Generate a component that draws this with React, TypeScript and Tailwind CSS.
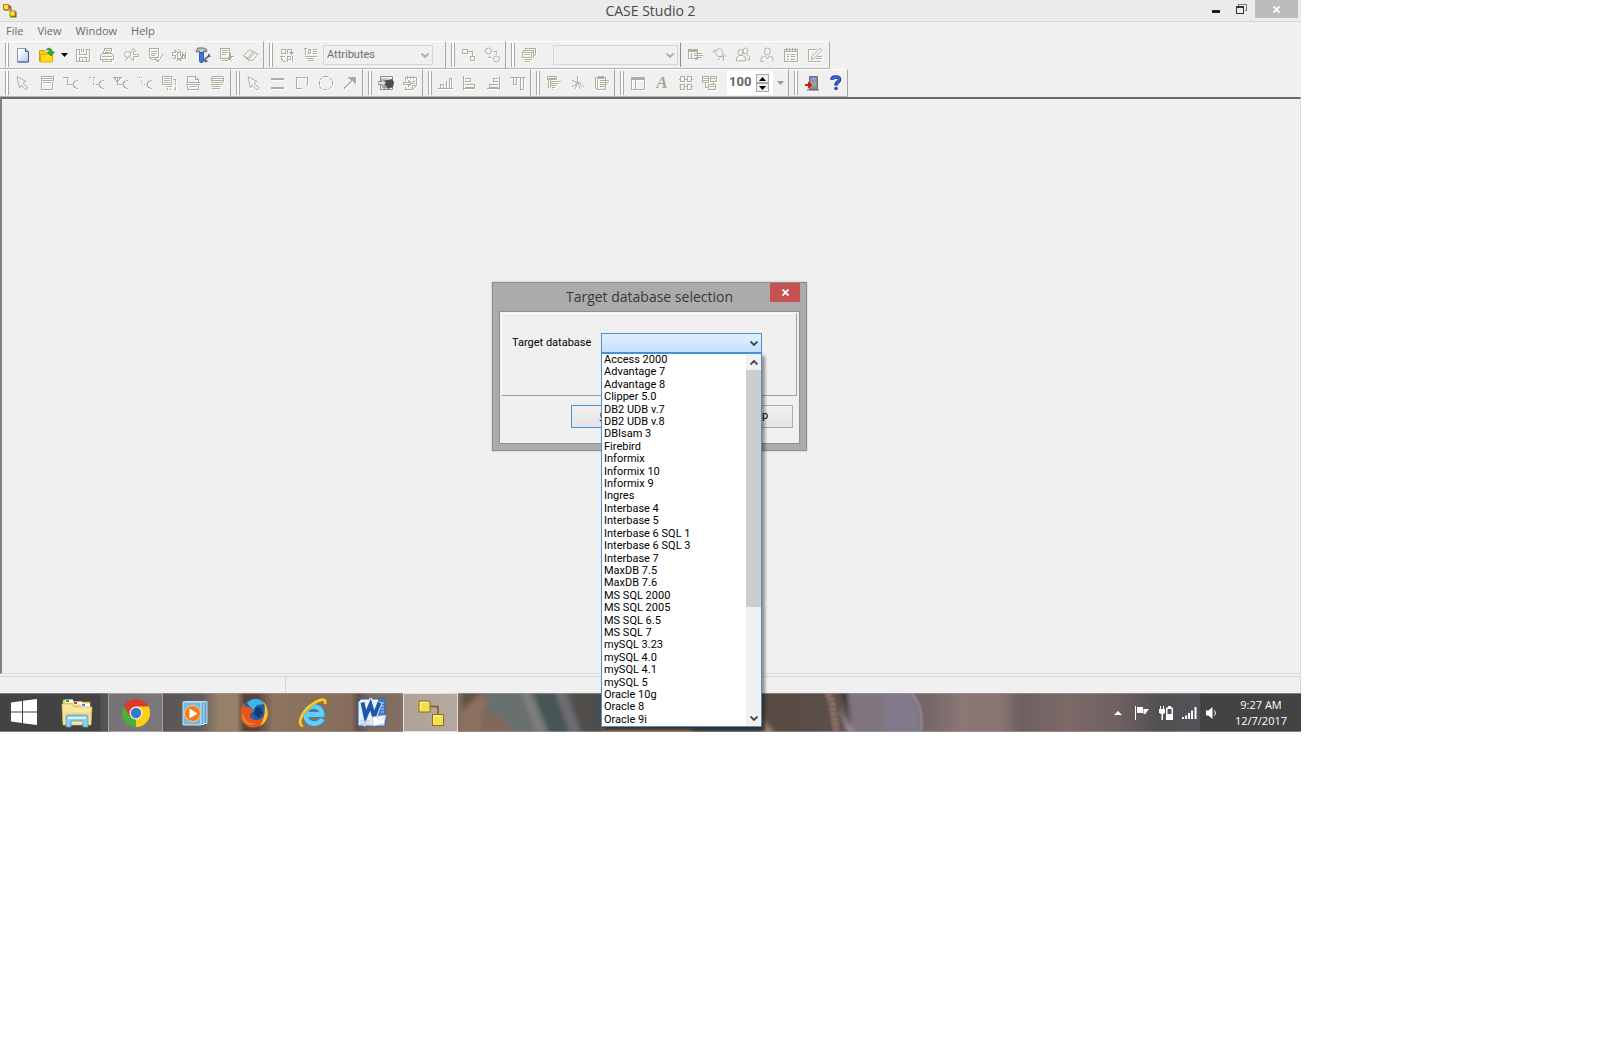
import React from "react";

type IconSpec = { d: string; fill?: string; tone?: string; round?: boolean };

const icons: Record<string, IconSpec> = {
  save: { d: "M1.5 2.5h3v5h7v-5h3v12h-13z M4.5 14.5v-4h7v4 M6.5 2v3 M8.5 2v3 M7.5 12v2" },
  print: { d: "M4.5 6.5l1-5h7l-1 5 M3.5 6.5h9l2 2v4h-13v-4z M3.5 12.5v2h9v-2 M7 3.5h4 M6 5.5h4 M3 9.5h10" },
  find: { d: "M1.5 7.5a3 3 0 1 0 6 0a3 3 0 1 0-6 0 M8 6.5V4l2.5-2.500l2 3h-2v3h5v2h-5v4l-3-3 M5 10.5l-3 3.500", round: true },
  check: { d: "M2.5 1.5h9v9h-9z M4 4.5h6 M4 6.5h6 M4 8.5h4 M2.5 10.5l2 2h4 M8 11l3 3.500l5-7" },
  sql: { d: "M4.5 5.5h-3v3h3v3h-3 M9.5 5.5h-3v6h4z M11.5 5v6.5h3 M3 3.5l3 1 M7 2.500l3 2 M6 14l2-2l3 2 M14 4.5v5l-2-2" },
  script: { d: "M1.5 1.5h9v10h-9z M3 3.5h6 M3 5.5h6 M3 7.5h4 M3 13.5h5 M8 14l6-5 M11.500 6v3h3 M9 10l4 4" },
  book: { d: "M.5 8.500l6-5.500l3.500 1.500l-5 7z M6 12.500l6-7l3 2l-6 6.500l-4-1l-4-4 M10 4.500l2 1 M4 11.500l3 2", round: true },
  model: { d: "M2.5 2.5h4v4h-4z M8.500 6.500v-4h4v4 M10.500 5l2 2l2-2 M1 9.5h5 M2.500 12l2 2.500h2 M2.500 8.500v4 M8.500 14.500v-5h3v3h-3 M13.500 9v6" },
  levels: { d: "M2.5 1.5v6 M5.5 2.5h2v4h-2z M9.5 2.5h4 M9.5 4.5h4 M9.5 6.5h4 M2 9.5h12 M3 11.5h8 M5 13.5h6 M1 1.5h3" },
  relation: { d: "M1.5 2.5h5v4h-5z M9.5 9.5h4v4h-4z M7 4.5h4.5v4" },
  circles: { d: "M.5 4a3 3 0 1 0 6 0a3 3 0 1 0-6 0 M8.500 12a3 3 0 1 0 6 0a3 3 0 1 0-6 0 M8 4.5h3.500v3 M4 8.500v2h3", round: true },
  stack: { d: "M4.5 3.500v-2h10v6l-2 2 M2.5 5.5v-2h10v7 M1.5 5.5h9v5h-9z M3 7.500h6 M3 12.500h8 M4 14.500h5 M13 5.500h-2" },
  entity: { d: "M1.5 2.5h9v9h-9z M1.5 3.500h9 M1.5 4.5h9 M6.5 6.5h8 M6.5 8.5h9 M8.5 10.5h6 M4.5 6v5 M7.500 12.500h3" },
  links: { d: "M1 5.500l3-3l3 3 M4 3.500c0 4 2 6 5 6 M6 2.500c4-2 6 1 6 5 M9.500 10l3-3l3 3 M7 13.500c2-3 2-4 5-4 M12.500 9v5", round: true },
  users: { d: "M8 4a2.500 3 0 1 1 5 0a2.500 3 0 1 1-5 0 M3 5.500a2.500 3 0 1 1 5 0a2.500 3 0 1 1-5 0 M1.500 14v-3.500l3-2h3l3 2v3.500z M12 7.500l2.500 2v3.500h-3", round: true },
  user: { d: "M5.500 4.500a3 3.500 0 1 1 6 0a3 3.500 0 1 1-6 0 M1.500 14.500l1-4l3-1.500 M6.500 9l2 3l2-3l3.500 1.500v4 M2 14.500h3", round: true },
  todo: { d: "M1.5 2.5h13v12h-13z M3.500 1v3 M6.500 1v3 M9.500 1v3 M12.500 1v3 M1.500 4.500h13 M4 7.500h2 M8 7.500h4 M4 9.500h2 M8 9.500h4 M4 12.500h2 M8 12.500h4" },
  edit: { d: "M10 2.500h-8.500v12h12 M4.500 12.500l.5-3l8-8l2 2l-8 8z M10 9.500h5 M9 11.500h6", round: true },
  pointer: { d: "M2 1.500l9 5l-3 1.500l5 5l-2 2l-4.500-5l-2 3z", round: true },
  table: { d: "M2.500 1.500h12v4h-12z M2.500 3.500h12 M2.500 7v7.500h11v-8 M4 7.500h8" },
  rel1: { d: "M0 2.500h5.500 M4.500 3v7 M4.500 9.500h6 M15 5.500h-2 M12.500 6l-2 2v3l2 2 M12.500 13.500h2.500", round: false },
  rel2: { d: "M0 2.500h2 M4 2.500h2 M4.500 4v2 M4.500 8v2 M7 9.500h3 M15 5.500h-2 M12.500 6l-2 2v3l2 2 M12.500 13.500h2.500" },
  rel3: { d: "M0 2.500h9 M1.500 3l3 4l3-4 M4.500 3v7 M4.500 9.500h6 M15 5.500h-2 M12.500 6l-2 2v3l2 2 M12.500 13.500h2.500" },
  rel4: { d: "M0 2.500h1M2 2.500h1M4 2.500h1 M4.500 5v1M4.500 7v1M5 9.500h1M7 9.500h1M9 9.500h1 M15 5.500h-2 M12.500 6l-2 2v3l2 2 M12.500 13.500h2.500" },
  copy: { d: "M1.500 1.500h9v8h-9z M3 3.500h6 M3 5.500h6 M3 7.500h6 M12 4.500h2.500v2M14.500 8v2M14.500 12v2.500h-2M10 14.500h-2M6.500 14.500v-2 M5.500 11.500h5v-1" },
  note: { d: "M2.500 7.500v-6h8l3 3v3 M10.500 1.500v3h3 M1 7.500h14 M2.500 9v5.500h11v-5 M4.500 11.500h7 M1 9.500h14" },
  view: { d: "M3.500 1.500h10l1 1v4l-1 1h-10l-1-1v-4z M3 3.500h11 M3 5.500h11 M2 9.500h12 M3 11.500h9 M3 13.500h8" },
  lines: { d: "M1 3.500h13 M1 4.500h13 M1 12.500h13 M1 13.500h13" },
  rect: { d: "M8 13.500h-5.500v-11h11v8" },
  ellipse: { d: "M5 1.500h5 M11 2.500l3 3 M14.500 6v4 M14 11l-3 3 M5 14.500h4 M4 14l-3-3 M1.500 10v-4 M2 5l2-2.500", round: true },
  arrow: { d: "M2 14l8-8 M2 13l8-8 M7 2.500h6.500v6z", fill: "#aaa590" },
  export: { d: "M3.500 5.500v-3h11v8l-4 4h-7v-3 M5.500 1v3 M8.500 1v3 M11.500 1v3 M1 7.500h5v-2l3 3l-3 3v-2h-5z M10 6.500h3 M10 8.500h3 M10 14v-3.500h4" },
  alignB: { d: "M0 13.500h15 M2.500 13v-4h3v4 M8.500 13v-7 M11.500 13v-10h2v10" },
  alignL: { d: "M1.500 1v14 M3 3.500h5v3h-5 M3 9.500h9v3h-9 M1 13.500h12" },
  alignR: { d: "M13.500 1v14 M12 3.500h-5v3h5 M12 9.500h-9v3h9 M1 13.500h12" },
  alignT: { d: "M0 2.500h15 M3.500 3v6h3v-6 M10.500 3v11h3v-11" },
  sort: { d: "M1.500 1.500h9v3h-9z M2.500 5v8 M4.500 5v9 M5 6.500h10 M5 8.500h8 M5 10.500h6 M6 12.500h3 M6 14.500h1 M3 3.500h7" },
  cut: { d: "M7.500 1v8 M8 7l6 5 M8 8l-6 4 M8 9l3 5 M7 9l-2 5 M8 8h3 M2 5l5 3", round: true },
  paste: { d: "M1.500 2.500h10v12h-8l-2-2z M4 1.500h5v2h-5z M5.500 5.500h9 M5.500 7.500h9 M5.500 9.500h7 M5.500 11.500h5 M3.500 4v10" },
  layout: { d: "M1.500 2.500h13v12h-13z M1.500 3.500h13 M1.500 4.500h13 M5.500 5v9" },
  grid: { d: "M2.500 1.500h4v5h-4z M9.500 1.500h4v5h-4z M2.500 9.500h4v5h-4z M9.500 9.500h4v5h-4z M1 4.500h1 M7 4.500h2 M14 4.500h1 M1 11.500h1 M7 11.500h2 M14 11.500h1" },
  tree: { d: "M.500 1.500h6v6h-6z M8.500 1.500h6v5h-6z M6.500 9.500h7v5h-7z M1 3.500h5 M1 5.500h5 M9 3.500h5 M7 11.500h6 M3.500 8v4h3 M11.500 7v2" },
};

function Ico({ name }: { name: string }) {
  const s = icons[name];
  const mode = s.round ? "auto" : "crispEdges";
  return (
    <svg className="size-4" viewBox="0 0 16 16" fill="none" shapeRendering={mode} aria-hidden="true">
      <path d={s.d} transform="translate(1 1)" stroke="#fff" />
      <path d={s.d} stroke={s.tone ?? "#b1ad9c"} fill={s.fill ?? "none"} />
    </svg>
  );
}

const Tool = ({ name, className = "" }: { name: string; className?: string }) => (
  <button aria-label={name} className={`flex h-6 w-6 shrink-0 items-center justify-center ${className}`}>
    <Ico name={name} />
  </button>
);

const Tools = ({ names }: { names: string[] }) => (
  <>
    {names.map((n) => (
      <Tool key={n} name={n} />
    ))}
  </>
);

function Group({ children, className = "" }: { children: React.ReactNode; className?: string }) {
  return (
    <div className={`flex h-7 shrink-0 items-center border-t border-r border-b border-t-white border-r-[#a6a6a6] border-b-[#b4b4b4] pl-[5px] ${className}`}>
      <span className="mr-0.5 h-6 w-1 border-x border-[#a9a9a9] bg-white" />
      {children}
    </div>
  );
}

const Chevron = ({ color, up = false }: { color: string; up?: boolean }) => (
  <svg className="h-[5px] w-2" viewBox="0 0 8 5" fill="none" stroke={color} strokeWidth="1.800" aria-hidden="true">
    <path d={up ? "M.5 4.500L4 1l3.500 3.500" : "M.5 .5L4 4L7.500 .5"} />
  </svg>
);

function ToolCombo({ label, value, className }: { label: string; value: string; className: string }) {
  return (
    <span className={`relative flex h-5 shrink-0 ${className}`}>
      <select aria-label={label} className="block h-5 w-full appearance-none border border-[#d6d6d6] bg-[#f0f0f0] px-[3px] font-['Roboto',sans-serif] text-[11px] leading-[18px] text-[#6d6d6d]">
        <option>{value}</option>
      </select>
      <span className="pointer-events-none absolute top-2 right-1 flex">
        <Chevron color="#aaa" />
      </span>
    </span>
  );
}

const databases = [
  "Access 2000", "Advantage 7", "Advantage 8", "Clipper 5.0", "DB2 UDB v.7", "DB2 UDB v.8", "DBIsam 3", "Firebird",
  "Informix", "Informix 10", "Informix 9", "Ingres", "Interbase 4", "Interbase 5", "Interbase 6 SQL 1",
  "Interbase 6 SQL 3", "Interbase 7", "MaxDB 7.5", "MaxDB 7.6", "MS SQL 2000", "MS SQL 2005", "MS SQL 6.5",
  "MS SQL 7", "mySQL 3.23", "mySQL 4.0", "mySQL 4.1", "mySQL 5", "Oracle 10g", "Oracle 8", "Oracle 9i",
];

function TitleBar() {
  return (
    <header className="relative flex h-[22px] items-start justify-center border-b border-[#d5d5d5] bg-[#ebebeb]">
      <svg className="absolute top-[3px] left-[2px] size-[15px]" viewBox="0 0 15 15" aria-hidden="true">
        <path d="M6 3.500h2.500l1 6" stroke="#8a6a1a" fill="none" strokeWidth="1.500" />
        <rect x="2" y="2" width="5.500" height="5.500" fill="#6b5a20" />
        <rect x="8.500" y="8.500" width="6" height="6" fill="#6b5a20" />
        <rect x="1.500" y="1.500" width="5" height="5" fill="#ffe23d" stroke="#b8860b" />
        <rect x="8" y="8" width="5" height="5" fill="#ffe23d" stroke="#b8860b" />
      </svg>
      <h1 className="font-['Open_Sans',sans-serif] text-[14px] leading-[22px] text-[#484848]">CASE Studio 2</h1>
      <div className="absolute top-0 right-[3px] flex h-[18px]">
        <button aria-label="Minimize" className="flex w-[26px] items-center justify-center pt-[5px]">
          <span className="h-[3px] w-2 bg-[#1e1e1e]" />
        </button>
        <button aria-label="Restore" className="flex w-[24px] items-center justify-center">
          <svg className="h-[10px] w-[11px]" viewBox="0 0 11 10" fill="none" stroke="#333" shapeRendering="crispEdges" aria-hidden="true">
            <path d="M2.500 2V.5h8v6H9" stroke="#777" />
            <path d="M.5 2.500h7v7h-7z M.5 3.500h7" />
          </svg>
        </button>
        <button aria-label="Close" className="ml-0.5 flex w-[43px] items-center justify-center bg-[#bcbcbc]">
          <svg className="size-[7px]" viewBox="0 0 7 7" stroke="#fff" strokeWidth="1.800" aria-hidden="true">
            <path d="M.5 .5l6 6M6.500 .5l-6 6" />
          </svg>
        </button>
      </div>
    </header>
  );
}

function Toolbars() {
  return (
    <div>
      <div className="flex">
        <Group>
          <button aria-label="New" className="flex h-6 w-6 items-center justify-center">
            <svg className="size-4" viewBox="0 0 16 16" aria-hidden="true">
              <defs>
                <linearGradient id="page" x1="0" y1="0" x2="1" y2="1">
                  <stop offset=".2" stopColor="#fff" />
                  <stop offset="1" stopColor="#a9c4f5" />
                </linearGradient>
              </defs>
              <path d="M2.500 1.500h8l3 3v10.500h-11z" fill="url(#page)" stroke="#8797b5" />
              <path d="M10.500 1.500v3h3M2.500 15h11v-10" fill="none" stroke="#44598a" />
            </svg>
          </button>
          <button aria-label="Open" className="flex h-6 w-[23px] items-center justify-center">
            <svg className="size-4" viewBox="0 0 16 16" aria-hidden="true">
              <path d="M.5 3.500h5l1.500 2h6v9H.5z" fill="#ffc812" stroke="#e09a00" />
              <path d="M1.500 7.500h12v7.500h-12z" fill="#ffdf1c" stroke="#eda800" />
              <path d="M7 3c2-3 6-2 6.500 2h2L12 9 8.500 5h2C10.500 3 9 2.500 7 3z" fill="#2eb135" stroke="#147a1c" strokeWidth=".6" />
            </svg>
          </button>
          <button aria-label="Recent files" className="flex h-6 w-[13px] items-center justify-center">
            <svg className="h-1 w-[7px]" viewBox="0 0 7 4" aria-hidden="true"><path d="M0 0h7L3.500 4z" /></svg>
          </button>
          <Tools names={["save", "print", "find", "check", "sql"]} />
          <button aria-label="Tools" className="flex h-6 w-6 items-center justify-center">
            <svg className="size-4" viewBox="0 0 16 16" fill="none" aria-hidden="true">
              <path d="M1 4l2-3h6l3 2-1 2-2-1.500v2H4V3.500L2 5.500z" fill="#c3cad2" stroke="#4f565f" strokeWidth=".9" />
              <path d="M4.500 6h4v8.500l-1 1h-2l-1-1z" fill="#3f74e8" stroke="#2447ab" strokeWidth=".8" />
              <path d="M9.500 14.500l1-3 3-2 .5-2.500M13.500 9.500l2-.5M10.500 11.500l-1 1M10 15l2.500-1.500" stroke="#5d656e" strokeWidth="1.600" />
            </svg>
          </button>
          <Tools names={["script", "book"]} />
        </Group>
        <Group className="pr-3">
          <Tools names={["model", "levels"]} />
          <ToolCombo label="Display level" value="Attributes" className="w-[110px]" />
        </Group>
        <Group>
          <Tools names={["relation", "circles"]} />
        </Group>
        <Group className="pr-0.5">
          <Tool name="stack" />
          <ToolCombo label="Submodel" value="" className="ml-3 w-[125px]" />
          <span className="mr-0.5 ml-0.5 h-6 w-px bg-[#8c8c8c]" />
          <Tools names={["entity", "links", "users", "user", "todo", "edit"]} />
        </Group>
      </div>
      <div className="flex">
        <Group className="pr-px">
          <Tools names={["pointer", "table", "rel1"]} />
          <span className="w-0.5" />
          <Tools names={["rel2", "rel3", "rel4", "copy", "note", "view"]} />
        </Group>
        <Group>
          <Tools names={["pointer", "lines", "rect", "ellipse", "arrow"]} />
        </Group>
        <Group>
          <button aria-label="Image" className="flex h-6 w-6 items-center justify-center">
            <svg className="size-4" viewBox="0 0 16 16" fill="none" aria-hidden="true">
              <path d="M2.500 1.500h12v13h-12z" fill="#f4f4f4" stroke="#8b8b8b" />
              <path d="M5 4l4 1 5-1 2 3-1 5-5 2-3-4-2-1 3-1z" fill="#4c4c4c" />
              <path d="M4 12l3-2 2 3-3 1z" fill="#999" />
              <path d="M3 3h8l-2 2-6 1z" fill="#c9c9c9" />
              <path d="M0 6.500h4v-2l4 3.500-4 3.500v-2H0z" fill="#e2e2e2" stroke="#808080" strokeWidth=".8" />
            </svg>
          </button>
          <Tool name="export" />
        </Group>
        <Group>
          <Tools names={["alignB", "alignL", "alignR", "alignT"]} />
        </Group>
        <Group>
          <Tools names={["sort", "cut", "paste"]} />
        </Group>
        <Group>
          <Tool name="layout" />
          <button aria-label="Font" className="h-6 w-6 font-['Liberation_Serif',serif] text-[17px] leading-6 font-bold text-[#aaa590] italic">A</button>
          <Tools names={["grid", "tree"]} />
          <div className="ml-[5px] flex h-6 w-[46px] items-center bg-white">
            <input aria-label="Zoom" defaultValue="100" className="w-[29px] pb-0.5 pl-0.5 font-['Roboto',sans-serif] text-[13px] font-bold text-[#666] outline-none" />
            <span className="flex flex-col">
              <button aria-label="Zoom in" className="flex h-[9px] w-[13px] items-center justify-center border border-[#aaa] bg-[#f0f0f0]">
                <svg className="h-1 w-[7px]" viewBox="0 0 7 4" aria-hidden="true"><path d="M0 4h7L3.500 0z" /></svg>
              </button>
              <button aria-label="Zoom out" className="flex h-[9px] w-[13px] items-center justify-center border border-[#aaa] bg-[#f0f0f0]">
                <svg className="h-1 w-[7px]" viewBox="0 0 7 4" aria-hidden="true"><path d="M0 0h7L3.500 4z" /></svg>
              </button>
            </span>
          </div>
          <button aria-label="Zoom presets" className="flex h-6 w-[15px] items-center justify-center">
            <svg className="h-1 w-[7px]" viewBox="0 0 7 4" aria-hidden="true"><path d="M0 0h7L3.500 4z" fill="#999" /></svg>
          </button>
        </Group>
        <Group>
          <button aria-label="Exit" className="flex h-6 w-6 items-center justify-center">
            <svg className="size-4" viewBox="0 0 16 16" aria-hidden="true">
              <path d="M5.500 1.500h8v13h-8z" fill="#8e8e8e" stroke="#6c6c6c" />
              <path d="M7.500 3h4.500v2.500H7.500z" fill="#7ea6f0" />
              <path d="M7 8h5M7 10h5" stroke="#b4b4b4" />
              <path d="M3 15h12" stroke="#666" />
              <path d="M1 9h3V6.500L8.500 10 4 13.500V11H1z" fill="#e01313" />
            </svg>
          </button>
          <button aria-label="Help" className="flex h-6 w-[23px] items-center justify-center">
            <svg className="size-4" viewBox="0 0 16 16" fill="none" aria-hidden="true">
              <path d="M4 5c0-4 7.500-4 7.500-.5 0 2.500-3.500 2.500-3.500 6" stroke="#142c86" strokeWidth="3.600" />
              <path d="M4 5c0-4 7.500-4 7.500-.5 0 2.500-3.500 2.500-3.500 6" stroke="#3a68ee" strokeWidth="2" />
              <circle cx="8" cy="13.500" r="1.800" fill="#2349c4" />
            </svg>
          </button>
        </Group>
      </div>
    </div>
  );
}

const dialogButton = "h-[23px] w-[72px] border bg-linear-to-b from-[#f0f0f0] to-[#e4e4e4] font-['Roboto',sans-serif] text-[11px]";

function TargetDialog() {
  return (
    <section role="dialog" aria-labelledby="dlg-title" className="w-[315px] border border-[#8e8e8e] bg-[#ababab] px-1.5 pb-1.5 shadow-[0_0_2px_rgba(0,0,0,0.25)]">
      <div className="relative flex h-7 justify-center">
        <h2 id="dlg-title" className="font-['Open_Sans',sans-serif] text-[14px] leading-7 text-[#383838]">Target database selection</h2>
        <button aria-label="Close" className="absolute top-0 right-0 flex h-[19px] w-[30px] items-center justify-center bg-[#c75050]">
          <svg className="size-[7px]" viewBox="0 0 7 7" stroke="#fff" strokeWidth="1.800" aria-hidden="true">
            <path d="M.5 .5l6 6M6.500 .5l-6 6" />
          </svg>
        </button>
      </div>
      <div className="border border-[#909090] bg-[#f0f0f0] p-px">
        <div className="mr-px flex h-[83px] items-start border-t border-r border-b border-l border-t-white border-r-[#a0a0a0] border-b-[#a0a0a0] border-l-white pt-[19px] pl-[10px]">
          <label htmlFor="target" className="w-[89px] font-['Roboto',sans-serif] text-[11px] leading-5 text-black">Target database</label>
          <div className="relative w-[161px]">
            <select id="target" className="block h-5 w-full appearance-none border border-[#4a90d9] bg-linear-to-b from-[#e2f0fd] to-[#c4e0fb]" />
            <span className="pointer-events-none absolute top-2 right-1 flex"><Chevron color="#444" /></span>
            <div className="absolute top-[20px] left-0 z-20 flex h-[374px] w-full border border-[#4a90d9] bg-white shadow-[3px_3px_3px_rgba(0,0,0,0.4)]">
              <ul role="listbox" aria-label="Target database" className="flex flex-1 flex-col font-['Roboto',sans-serif] text-[11px] leading-3 text-black">
                {databases.map((d) => (
                  <li key={d} role="option" aria-selected={false} className="flex-1 pl-0.5">{d}</li>
                ))}
              </ul>
              <div className="flex w-[15px] flex-col bg-[#f0f0f0]">
                <button aria-label="Scroll up" className="flex h-4 items-center justify-center"><Chevron color="#444" up /></button>
                <span className="h-[237px] bg-[#cdcdcd]" />
                <button aria-label="Scroll down" className="mt-auto flex h-4 items-center justify-center"><Chevron color="#444" /></button>
              </div>
            </div>
          </div>
        </div>
        <div className="flex h-[46px] justify-end gap-[3px] pt-[9px] pr-[5px]">
          <button className={`${dialogButton} border-[#4a90e2]`}><u>O</u>K</button>
          <button className={`${dialogButton} border-[#adadad]`}>Cancel</button>
          <button className={`${dialogButton} border-[#adadad]`}>Help</button>
        </div>
      </div>
    </section>
  );
}

const Wallpaper = () => (
  <svg className="absolute inset-0 -z-10 h-full w-full" viewBox="0 0 1301 39" preserveAspectRatio="none" aria-hidden="true">
    <defs>
      <linearGradient id="wall">
        <stop offset="0" stopColor="#434343" />
        <stop offset=".077" stopColor="#434343" />
        <stop offset=".078" stopColor="#555154" />
        <stop offset=".13" stopColor="#5b5658" />
        <stop offset=".155" stopColor="#625d60" />
        <stop offset=".168" stopColor="#978068" />
        <stop offset=".182" stopColor="#96806c" />
        <stop offset=".188" stopColor="#594338" />
        <stop offset=".198" stopColor="#5c463a" />
        <stop offset=".21" stopColor="#8d7460" />
        <stop offset=".27" stopColor="#866c5a" />
        <stop offset=".275" stopColor="#64504a" />
        <stop offset=".285" stopColor="#7f6a5c" />
        <stop offset=".35" stopColor="#8c7a6e" />
        <stop offset=".358" stopColor="#605247" />
        <stop offset=".4" stopColor="#66564b" />
        <stop offset=".46" stopColor="#4c4c4b" />
        <stop offset=".58" stopColor="#564b42" />
        <stop offset=".63" stopColor="#5a4d48" />
        <stop offset=".7" stopColor="#6e5f60" />
        <stop offset=".74" stopColor="#8a7776" />
        <stop offset=".77" stopColor="#887472" />
        <stop offset=".785" stopColor="#6e5f5f" />
        <stop offset=".82" stopColor="#7c6a68" />
        <stop offset=".86" stopColor="#6f6060" />
        <stop offset=".89" stopColor="#525053" />
        <stop offset=".922" stopColor="#545257" />
        <stop offset=".923" stopColor="#434343" />
        <stop offset="1" stopColor="#434343" />
      </linearGradient>
      <filter id="soft"><feGaussianBlur stdDeviation="2" /></filter>
      <filter id="softer"><feGaussianBlur stdDeviation="1" /></filter>
    </defs>
    <rect width="1301" height="39" fill="url(#wall)" />
    <g filter="url(#soft)">
      <path d="M486 -3h46l20 45h-46l-20-24z" fill="#69716f" />
      <path d="M459 42V20L483 -2l4 10-6 22 4 12z" fill="#8b705d" />
      <path d="M484 18c12 0 20 10 34 24h-38z" fill="#80695a" />
      <path d="M520 -3h10l16 45h-9z" fill="#7f7c7e" />
      <path d="M532 -3h36l14 45h-32z" fill="#465455" />
      <path d="M554 -3h12l16 45h-12z" fill="#6c6c70" />
      <path d="M602 36h90v6h-90z" fill="#9a6a4a" />
      <path d="M764 26l12 16h-12z" fill="#9c8168" />
      <path d="M846 -3h64c10 8 13 25 11 45h-69z" fill="#80747f" />
      <path d="M885 -3h22c8 8 12 22 10 45h-30z" fill="#827a8c" />
      <path d="M840 -3h7l3 28z" fill="#363238" />
      <path d="M838 14l18 28h-8z" fill="#9a8b99" />
    </g>
    <g filter="url(#softer)" fill="none">
      <path d="M828 0c6 12 4 20 9 39" stroke="#9a796c" strokeWidth="7" strokeDasharray="4 1" opacity=".8" />
      <path d="M911 0c9 8 12 24 10 39" stroke="#a099a3" strokeWidth="1.500" />
    </g>
    <path d="M0 .5h1301M0 38.500h1301" stroke="#a49e9c" opacity=".6" />
  </svg>
);

const taskButton = "flex h-[39px] w-[55px] items-center justify-center";

function Taskbar() {
  return (
    <footer className="relative isolate flex h-[39px] items-center">
      <Wallpaper />
      <nav aria-label="Taskbar" className="flex items-center gap-1">
        <button aria-label="Start" className="flex h-[39px] w-[45px] items-center justify-end pb-px pr-2">
          <svg className="size-[26px]" viewBox="0 0 26 26" fill="#fff" aria-hidden="true">
            <path d="M0 3.500l11-1.500v10.500H0zM12 1.800L26 0v12.500H12zM0 13.500h11V24L0 22.500zM12 13.500h14V26l-14-1.800z" />
          </svg>
        </button>
        <button aria-label="File Explorer" className={taskButton}>
          <svg className="h-[30px] w-8" viewBox="0 0 32 30" aria-hidden="true">
            <path d="M2 2h9l2 2h16v20H2z" fill="#e9cf72" stroke="#c9a94c" strokeWidth=".6" />
            <path d="M4 1.500h8v3H4z" fill="#fff" /><path d="M5 2h3v2H5z" fill="#1fae3d" />
            <path d="M12 3.500h9v3h-9z" fill="#fff" /><path d="M13 4h3v2h-3z" fill="#d9402a" />
            <path d="M20 5.500h9v3h-9z" fill="#fff" /><path d="M21 6h3v2h-3z" fill="#2d8fe0" />
            <path d="M1 6h10l2 3h18l-1 18H2z" fill="#f8e6a0" stroke="#d8ba60" strokeWidth=".6" />
            <path d="M2 14h28v5H2z" fill="#f3dc8a" />
            <path d="M5 29V19q0-2 2-2h18q2 0 2 2v10h-5v-6H10v6z" fill="#8fcdea" stroke="#4c9dc8" strokeWidth=".8" />
            <path d="M7 19h18v2H7z" fill="#d8f1fb" />
          </svg>
        </button>
        <button aria-label="Chrome" className={`${taskButton} border border-[#a5a3a4] bg-white/20`}>
          <svg className="size-7" viewBox="0 0 28 28" aria-hidden="true">
            <path d="M14 14L1.900 7A14 14 0 0 1 26.100 7z" fill="#dc3a2c" />
            <path d="M14 14L26.100 7A14 14 0 0 1 14 28z" fill="#fdce12" />
            <path d="M14 14L14 28A14 14 0 0 1 1.900 7z" fill="#4cae3c" />
            <path d="M14 7.500h12.400L26 7A14 14 0 0 0 1.900 7L8 17.500z" fill="#dc3a2c" />
            <path d="M20 17.500L14 28A14 14 0 0 0 26.400 7.500H14z" fill="#fdce12" />
            <circle cx="14" cy="14" r="6.500" fill="#f3f3f3" />
            <circle cx="14" cy="14" r="5.200" fill="#3777c4" />
          </svg>
        </button>
        <button aria-label="Media Player" className={taskButton}>
          <svg className="size-[26px]" viewBox="0 0 26 26" aria-hidden="true">
            <path d="M6 1.500h19v22H6z" fill="#5ba4cf" stroke="#b8e0f4" />
            <path d="M3 1.500h19v23H3z" fill="#67afd8" stroke="#b8e0f4" />
            <path d="M1 2h18v23H1z" fill="#78b9df" stroke="#c8e9f8" />
            <circle cx="10.500" cy="13.500" r="8" fill="#f27a1c" stroke="#fbd0a4" />
            <path d="M7.500 8.500v10l8-5z" fill="#fff" />
          </svg>
        </button>
        <button aria-label="Firefox" className={taskButton}>
          <svg className="h-[30px] w-7" viewBox="0 0 28 30" aria-hidden="true">
            <circle cx="15" cy="13" r="12.500" fill="#1e5ea8" />
            <path d="M7 5c5-6 14-5 18 1l-8 1-4 5z" fill="#43b3e6" />
            <path d="M16 9l5 1 2 5-4 5-5-4z" fill="#133b78" />
            <path d="M24 4c6 8 5 19-4 24C12 32 3 28 1 20c-1-6 0-11 3-15l1 4c3-1 5 0 6 2l3 1c-1 3-4 3-4 6 1 4 7 5 11 3 5-4 6-11 3-17z" fill="#e4571c" />
            <path d="M24 4c6 8 5 19-4 24 4-6 6-15 4-24z" fill="#fbc12e" />
            <path d="M3 15c1 8 7 11 13 11-6 3-13-1-14-7z" fill="#f2822a" />
          </svg>
        </button>
        <button aria-label="Internet Explorer" className={taskButton}>
          <svg className="size-[30px]" viewBox="0 0 30 30" fill="none" aria-hidden="true">
            <path d="M24.500 21c-4 7-17 6-17-4.500s16-11 16.500 0H10" stroke="#2389c9" strokeWidth="6.500" />
            <path d="M24.500 21c-4 7-17 6-17-4.500s16-11 16.500 0H10" stroke="#65cdf3" strokeWidth="4.800" />
            <path d="M5 28C-1 27 3 15 12 8S29-1 27 6" stroke="#c88a08" strokeWidth="3.400" />
            <path d="M5 28C-1 27 3 15 12 8S29-1 27 6" stroke="#fcc927" strokeWidth="2.400" />
          </svg>
        </button>
        <button aria-label="Word" className={taskButton}>
          <svg className="size-[29px]" viewBox="0 0 29 29" fill="none" aria-hidden="true">
            <path d="M4 1h24v27H1V4z" fill="#e6f0fb" stroke="#2b5fac" />
            <path d="M21 1h7v18h-7z" fill="#3d78c8" />
            <path d="M24 5h3M24 8h3M24 11h3M24 14h3" stroke="#bfd7f2" />
            <path d="M5.500 4l3 15 5-13 3.500 13 5.500-15" stroke="#e6f0fb" strokeWidth="6" />
            <path d="M5.500 4.500l3 14 5-12 3.500 12 5.500-14" stroke="#1e56a8" strokeWidth="4" />
            <path d="M3 23h10M3 26h10" stroke="#a9c2e2" />
            <path d="M15 19l14-2-2 9-11 2z" fill="#fff" stroke="#9fb6d6" strokeWidth=".7" />
            <path d="M19 18l4 4.500 5-5" stroke="#9fb6d6" strokeWidth=".7" />
          </svg>
        </button>
        <button aria-label="CASE Studio 2" className={`${taskButton} border border-[#e2dedb] bg-white/35`}>
          <svg className="size-[26px]" viewBox="0 0 26 26" aria-hidden="true">
            <path d="M11 6.500h9v8" stroke="#7d6112" fill="none" strokeWidth="1.500" />
            <rect x="1" y="1" width="11" height="11" fill="#f5df4e" stroke="#94700c" />
            <rect x="14.500" y="14.500" width="11" height="11" fill="#f5df4e" stroke="#94700c" />
            <path d="M2.500 10V2.500H10M16 23.500V16h7.500" stroke="#fdf4a0" fill="none" />
          </svg>
        </button>
      </nav>
      <div className="ml-auto flex items-center gap-2 pr-3">
        <button aria-label="Show hidden icons" className="flex w-4 justify-center">
          <svg className="h-1 w-2" viewBox="0 0 8 4" fill="#fff" aria-hidden="true"><path d="M0 4l4-4 4 4z" /></svg>
        </button>
        <svg className="h-[14px] w-4" viewBox="0 0 16 14" fill="#fff" role="img" aria-label="Action Center">
          <path d="M1 0h1v14H1zM3 1h6v6H3zM9.500 3H15l-2 2.500L11.500 8h-2z" />
        </svg>
        <svg className="h-[14px] w-4" viewBox="0 0 16 14" fill="#fff" role="img" aria-label="Battery">
          <path d="M2 0h1v3h2V0h1v3h1v4L5 8v6H3.500V8L1 7V3h1zM10 0h3v1.500h2V14H8V1.500h2zM9.500 3v5h4V3z" fillRule="evenodd" />
        </svg>
        <svg className="h-[13px] w-[15px]" viewBox="0 0 15 13" fill="#fff" role="img" aria-label="Network">
          <path d="M0 11h2v2H0zM3 9.500h2V13H3zM6 7h2v6H6zM9 4.500h2V13H9zM12.500 1h2v12h-2z" />
        </svg>
        <svg className="h-3 w-[14px]" viewBox="0 0 14 12" role="img" aria-label="Volume">
          <path d="M1 3.500h2.500L7.500 0v12L3.500 8.500H1z" fill="#fff" />
          <path d="M9.500 3.500q2 2.500 0 5" stroke="#fff" fill="none" />
        </svg>
        <div className="ml-1.5 w-14 text-center font-['Open_Sans',sans-serif] text-[11px] leading-4 text-white">
          <div>9:27 AM</div>
          <div>12/7/2017</div>
        </div>
      </div>
    </footer>
  );
}

export default function App() {
  return (
    <div className="bg-white pr-[299px] font-['Liberation_Sans',Arial,sans-serif]">
      <div className="bg-[#f0f0f0]">
        <TitleBar />
        <nav aria-label="Menu" className="flex h-[19px] items-center gap-[14px] pl-1.5 font-['Open_Sans',sans-serif] text-[11px] text-[#6d6d6d]">
          <button>File</button>
          <button>View</button>
          <button>Window</button>
          <button>Help</button>
        </nav>
        <Toolbars />
        <main className="flex min-h-[577px] items-start justify-center border-t-2 border-r border-b border-l-2 border-t-[#696969] border-r-[#dcdcdc] border-b-[#dcdcdc] border-l-[#808080] pt-[183px] pr-[3px]">
          <TargetDialog />
        </main>
        <div className="flex h-[19px] pt-0.5">
          <span className="w-[286px] border-t border-r border-[#d6d6d6]" />
          <span className="flex-1 border-t border-r border-[#d6d6d6]" />
        </div>
        <Taskbar />
      </div>
    </div>
  );
}
